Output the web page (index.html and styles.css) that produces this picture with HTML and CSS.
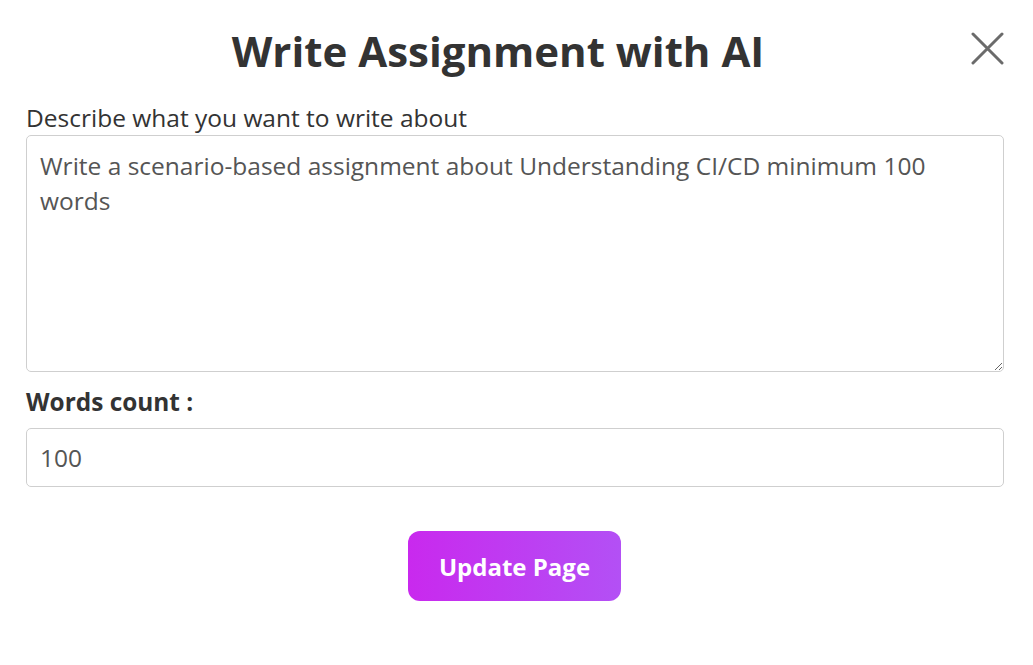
FILE: index.html
```html
<!DOCTYPE html>
<html lang="en">
<head>
  <meta charset="UTF-8">
  <meta name="viewport" content="width=device-width, initial-scale=1.0">
  <title>Write Assignment with AI</title>
  <link rel="stylesheet" href="styles.css">
</head>
<body>
  <div class="modal">
    <div class="modal-head">
      <h1>Write Assignment with AI</h1>
      <button class="close-btn" aria-label="Close">
        <svg width="34" height="34" viewBox="0 0 34 34">
          <path d="M3 3 L32 32 M32 3 L3 32" stroke="#6b6b6b" stroke-width="3" stroke-linecap="round" fill="none"/>
        </svg>
      </button>
    </div>
    <form class="form">
      <label for="topic" class="label">Describe what you want to write about</label>
      <textarea id="topic" class="field field-area">Write a scenario-based assignment about Understanding CI/CD minimum 100 words</textarea>
      <label for="count" class="label label-bold">Words count :</label>
      <input id="count" class="field field-input" type="text" value="100">
      <div class="actions">
        <button type="button" class="btn-update">Update Page</button>
      </div>
    </form>
  </div>
</body>
</html>
```

FILE: styles.css
```css
:root {
  --text-color: #333333;
  --field-text: #555555;
  --border-color: #cfcfcf;
  --btn-start: #c929ee;
  --btn-end: #b350f5;
}
* {
  box-sizing: border-box;
  margin: 0;
  padding: 0;
}
body {
  font-family: 'Open Sans', 'Noto Sans', sans-serif;
  background: #ffffff;
  color: var(--text-color);
}
.modal {
  padding: 21px 29px 0 26px;
}
.modal-head {
  display: flex;
  align-items: flex-start;
}
.modal-head h1 {
  flex: 1;
  text-align: center;
  font-size: 42px;
  font-weight: 700;
  line-height: 60px;
  color: var(--text-color);
}
.close-btn {
  border: none;
  background: none;
  cursor: pointer;
  width: 34px;
  height: 34px;
  margin-top: 10px;
}
.close-btn svg {
  display: block;
}
.form {
  display: flex;
  flex-direction: column;
}
.label {
  font-size: 24.5px;
  line-height: 33px;
  margin-top: 20px;
  color: var(--text-color);
}
.label-bold {
  font-weight: 700;
  font-size: 24.4px;
  margin-top: 13px;
}
.field {
  font-family: 'Open Sans', 'Noto Sans', sans-serif;
  font-size: 24.5px;
  color: var(--field-text);
  border: 1px solid var(--border-color);
  border-radius: 5px;
  padding: 10px 13px;
  background: #ffffff;
  width: 100%;
}
.field-area {
  height: 237px;
  line-height: 35px;
  padding-top: 12px;
  margin-top: 1px;
  resize: vertical;
}
.field-input {
  height: 59px;
  margin-top: 10px;
}
.actions {
  display: flex;
  justify-content: center;
  margin-top: 44px;
}
.btn-update {
  font-family: 'Open Sans', 'Noto Sans', sans-serif;
  font-size: 24px;
  font-weight: 700;
  color: #ffffff;
  border: none;
  border-radius: 12px;
  width: 213px;
  height: 70px;
  margin-left: -1px;
  background: linear-gradient(90deg, var(--btn-start), var(--btn-end));
  cursor: pointer;
}
```
